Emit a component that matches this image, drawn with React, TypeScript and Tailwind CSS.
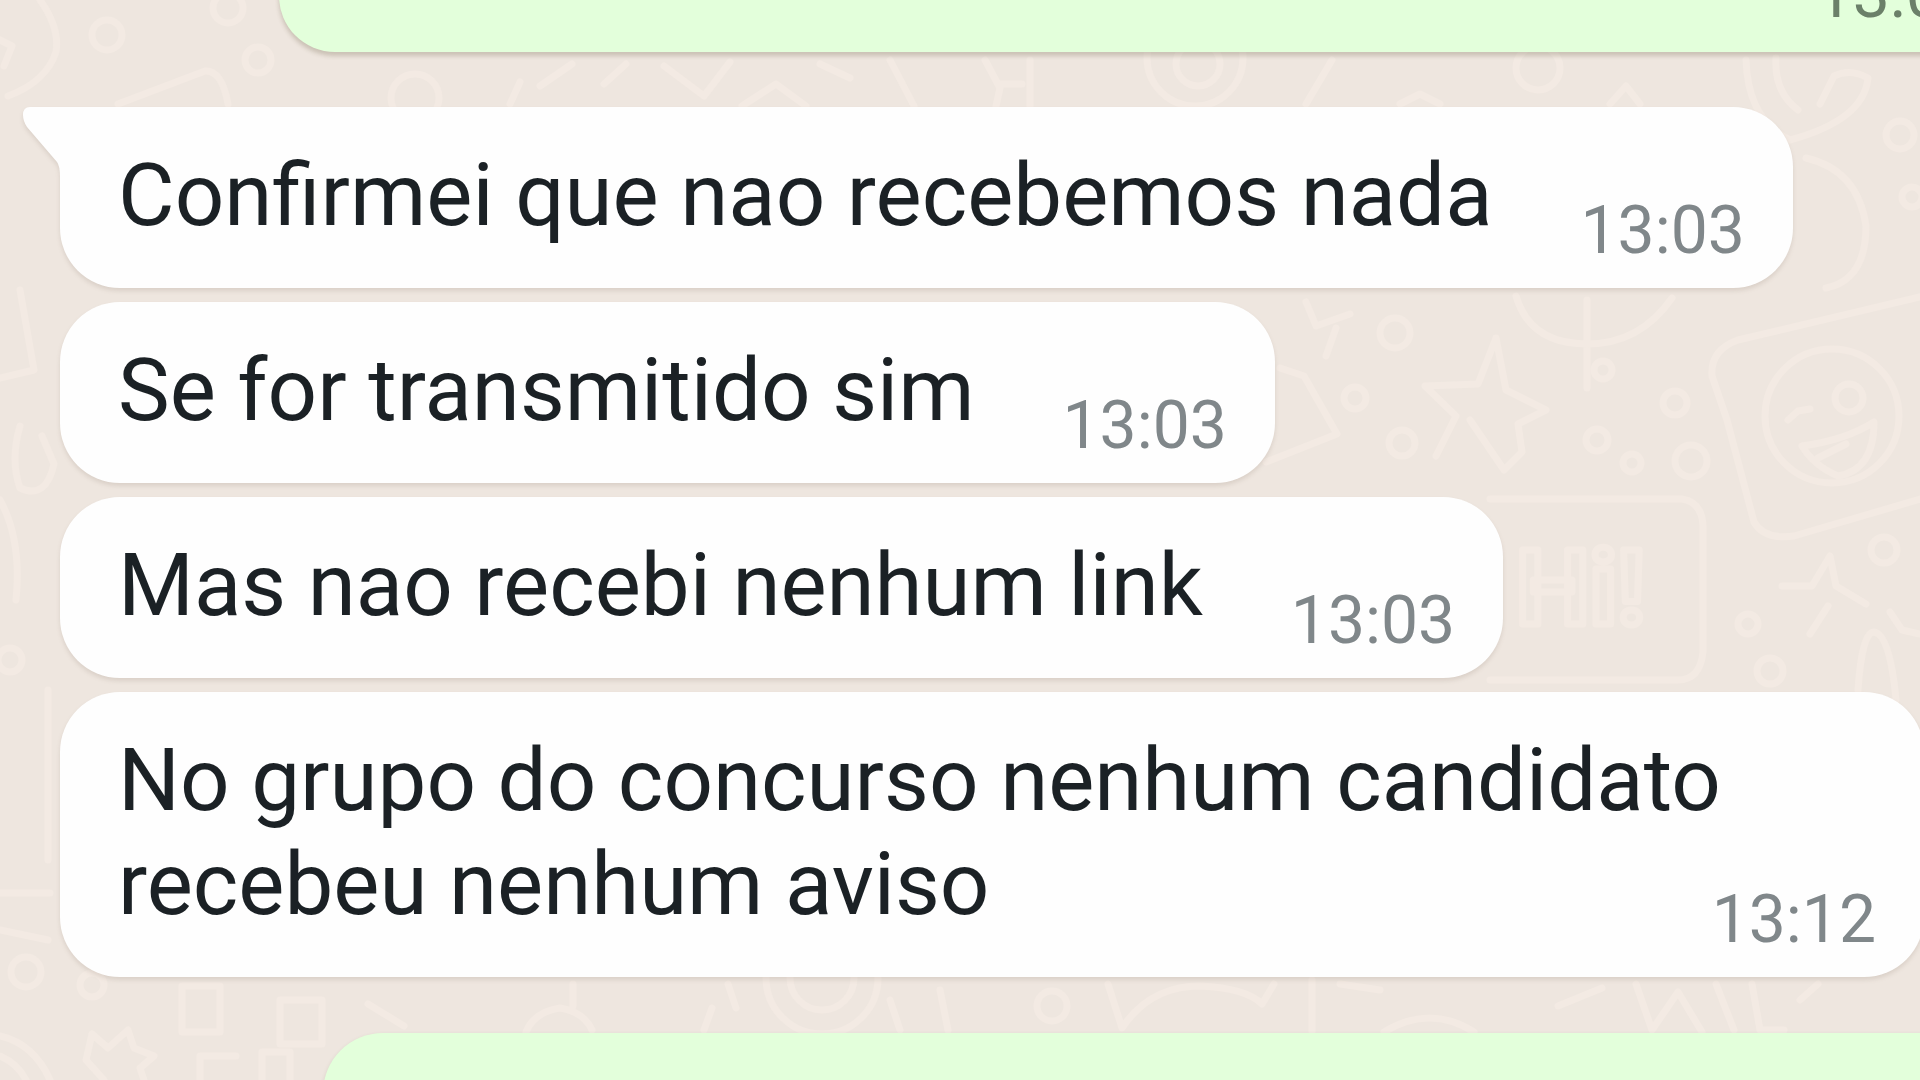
import clsx from "clsx";

type Message = {
  id: number;
  lines: string[];
  time: string;
};

const messages: Message[] = [
  { id: 1, lines: ["Confirmei que nao recebemos nada"], time: "13:03" },
  { id: 2, lines: ["Se for transmitido sim"], time: "13:03" },
  { id: 3, lines: ["Mas nao recebi nenhum link"], time: "13:03" },
  { id: 4, lines: ["No grupo do concurso nenhum candidato", "recebeu nenhum aviso"], time: "13:12" },
];

// Small rings scattered over the wallpaper: [cx, cy, r]
const rings = [
  [107, 35, 15], [228, 8, 15], [258, 60, 13], [415, 98, 24], [1195, 58, 48], [1198, 64, 22],
  [1395, 333, 15], [1355, 398, 11], [1402, 443, 13], [1597, 440, 11], [1632, 463, 9],
  [1675, 403, 12], [1691, 461, 16], [1748, 624, 10], [1770, 671, 13], [1884, 550, 13],
  [1603, 370, 9], [1900, 135, 14], [1912, 197, 10], [26, 972, 15], [92, 985, 12],
  [1052, 1006, 15], [822, 978, 32], [822, 978, 56], [10, 660, 12], [1538, 68, 22],
];

const doodles = [
  // top left
  "M40 0Q60 28 56 52Q46 82 8 96",
  "M0 40L12 46L4 66",
  "M118 104L205 71Q222 70 228 104",
  // strip under the first bubble
  "M540 86L572 64M604 84L626 64M510 104L520 82",
  "M664 66L704 96L730 62",
  "M742 106L776 84L806 106",
  "M820 64L850 78M890 60L914 106",
  "M985 60L1000 88L996 106M1030 60V106M1000 84H1022",
  "M1332 60L1306 104M1400 104L1420 94L1440 104M1610 104L1626 86L1640 104",
  // leaf on the right
  "M1746 60Q1748 120 1790 140Q1864 120 1868 78Q1850 68 1834 76L1820 104",
  "M1776 58Q1774 92 1798 110",
  "M1806 158Q1858 170 1866 226Q1866 280 1826 288",
  // balloon
  "M1516 296Q1530 344 1587 344Q1640 344 1672 298M1587 300V388",
  // star
  "M1496 338L1478 384L1425 386L1456 416L1436 456M1496 338L1506 390L1546 410L1518 424L1522 452L1504 470L1470 420",
  "M1280 368L1304 376L1337 434L1266 462",
  "M1306 302L1316 326L1350 314M1326 356L1336 328",
  // photo with a winking face
  "M1924 296L1738 340Q1710 350 1712 376L1727 420L1754 522Q1764 540 1794 536L1924 498",
  "M1765 416a67 67 0 1 0 134 0a67 67 0 1 0 -134 0",
  "M1835 398a14 14 0 1 0 28 0a14 14 0 1 0 -28 0M1788 420L1798 411L1810 409",
  "M1802 446Q1846 440 1874 422Q1874 470 1838 476Q1814 466 1802 446M1818 458L1846 444",
  // greeting card
  "M1490 499H1682Q1702 502 1703 526V652Q1700 680 1678 680H1490",
  // sparkle
  "M1782 586H1812L1830 556L1836 586L1866 604M1810 634L1828 606M1890 612L1902 630L1920 634",
  "M1858 690Q1862 632 1874 632Q1890 634 1896 700",
  // left edge
  "M20 290L34 370L0 378",
  "M20 426Q10 460 20 488Q46 500 54 464L42 436",
  "M48 690V860M0 893H50M0 930L48 940",
  "M0 500Q22 540 16 600",
  // bottom left
  "M182 986H220V1032H182ZM280 1000H322V1044H280ZM200 1080V1056H236M262 1080V1052H290V1080",
  "M92 1034L108 1048L128 1030L134 1048L154 1056L140 1068L144 1080M104 1080L86 1060L92 1034",
  "M0 1036Q34 1044 50 1080M0 1056Q18 1064 26 1080",
  // strip over the last bubble
  "M368 1004L404 1026M526 1032Q534 1012 560 1008Q584 1012 592 1030M573 984V1006",
  "M704 1030L712 1008M728 984L736 1008M900 1030L890 1000M940 990L948 1030",
  "M1108 984L1122 1028Q1150 986 1200 986Q1246 988 1262 1004L1274 984",
  "M1312 980V1032M1384 1032Q1430 1004 1474 1032M1340 984L1380 990",
  "M1558 1006L1602 988M1636 984L1652 1030L1678 992L1702 1032M1716 984L1734 1030M1752 984L1760 1030L1784 1030M1800 1000L1818 984",
];

function Wallpaper() {
  return (
    <svg
      className="absolute inset-0 h-full w-full"
      viewBox="0 0 1920 1080"
      preserveAspectRatio="xMidYMid slice"
      aria-hidden="true"
    >
      <g fill="none" stroke="#f3eae3" strokeWidth="7" strokeLinecap="round" strokeLinejoin="round">
        {rings.map(([cx, cy, r]) => (
          <circle key={`${cx}-${cy}-${r}`} cx={cx} cy={cy} r={r} />
        ))}
        {doodles.map((d) => (
          <path key={d} d={d} />
        ))}
        <text x="1516" y="624" fontSize="104" fontWeight="700" strokeWidth="7">
          Hi!
        </text>
      </g>
    </svg>
  );
}

function Tail() {
  return (
    <svg className="absolute top-0 -left-[38px] h-[70px] w-[60px]" viewBox="0 0 60 70" aria-hidden="true">
      <path d="M60 0H8Q1 0 1 8Q1 14 5 20L35 55Q38 59 38 70H60Z" fill="#fefefe" />
    </svg>
  );
}

function ReceivedBubble({ message, first }: { message: Message; first: boolean }) {
  const multiline = message.lines.length > 1;

  return (
    <li
      className={clsx(
        "relative flex items-end rounded-[60px] bg-[#fefefe] pl-[58px] pr-12 drop-shadow-[0_3px_2px_rgba(80,60,40,0.12)]",
        first && "rounded-tl-none",
        multiline ? "-mr-1 self-stretch justify-between" : "gap-[88px]"
      )}
    >
      {first && <Tail />}
      <p className="pt-9 pb-[41px] text-[87px] leading-[104px] whitespace-nowrap text-[#1b2125]">
        {message.lines.map((line) => (
          <span key={line} className="block">
            {line}
          </span>
        ))}
      </p>
      <time className={clsx("pb-6 text-[66px] leading-[66px] text-[#80878a]", multiline && "-ml-40")}>
        {message.time}
      </time>
    </li>
  );
}

export default function App() {
  return (
    <main className="relative h-screen overflow-hidden bg-[#eee6df] font-['Roboto',sans-serif]">
      <Wallpaper />
      <div className="relative flex flex-col">
        <div className="-mt-[60px] -mr-24 ml-[279px] flex h-28 items-end justify-end rounded-[60px] bg-[#e3ffdb] pr-9 shadow-[0_4px_4px_rgba(90,80,50,0.24)]">
          <time className="pb-6 text-[66px] leading-[66px] text-[#6b8069]">13:03</time>
        </div>

        <ul className="mt-[55px] ml-[60px] flex flex-col items-start gap-[14px]">
          {messages.map((message, index) => (
            <ReceivedBubble key={message.id} message={message} first={index === 0} />
          ))}
        </ul>

        <div className="mt-14 -mr-24 ml-[323px] h-40 rounded-[60px] bg-[#e3ffdb] shadow-[0_2px_4px_rgba(90,80,50,0.16)]" />
      </div>
    </main>
  );
}
